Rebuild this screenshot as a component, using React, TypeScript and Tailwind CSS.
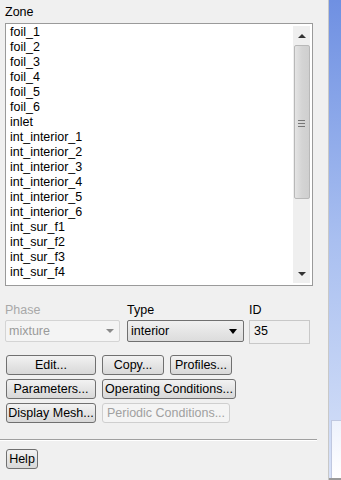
import React from 'react';

const zones = [
  'foil_1', 'foil_2', 'foil_3', 'foil_4', 'foil_5', 'foil_6', 'inlet',
  'int_interior_1', 'int_interior_2', 'int_interior_3', 'int_interior_4',
  'int_interior_5', 'int_interior_6', 'int_sur_f1', 'int_sur_f2', 'int_sur_f3', 'int_sur_f4',
];

const Btn: React.FC<{ label: string; w: string; disabled?: boolean }> = ({ label, w, disabled }) => (
  <div
    className={`${w} h-[20px] flex items-center justify-center rounded-[3px] border text-[12.5px] ${
      disabled
        ? 'border-[#cfcfcf] bg-[#f4f4f4] text-[#a0a0a0]'
        : 'border-[#707070] bg-gradient-to-b from-[#f2f2f2] to-[#d8d8d8] text-black'
    }`}
  >
    {label}
  </div>
);

const App: React.FC = () => {
  return (
    <div className="w-[341px] h-[480px] flex bg-[#f0f0f0] overflow-hidden" style={{ fontFamily: '"Liberation Sans", Arial, sans-serif' }}>
      <div className="w-[329px] h-full flex flex-col border-r border-[#c8c8c8]">
        <div className="pl-[5px] pt-[5px] text-[12.5px] leading-[14px]">Zone</div>
        <div className="ml-[5px] mt-[4px] w-[308px] h-[263px] border border-[#9a9a9a] bg-white flex">
          <div className="flex-1 pl-[4px] pt-[1px] text-[12.5px] leading-[15px]">
            {zones.map((z) => (
              <div key={z}>{z}</div>
            ))}
          </div>
          <div className="w-[17px] mr-[2px] my-[2px] bg-[#efefef] flex flex-col items-center">
            <div className="h-[19px] flex items-center justify-center">
              <div className="w-0 h-0 border-l-[4px] border-r-[4px] border-b-[4px] border-l-transparent border-r-transparent border-b-[#333]" />
            </div>
            <div className="w-[16px] h-[154px] rounded-[2px] border border-[#b8b8b8] bg-gradient-to-r from-[#e4e4e4] via-[#d4d4d4] to-[#cfcfcf] flex flex-col items-center justify-center gap-[2px] pt-[2px]">
              <div className="w-[7px] h-px bg-[#777]" />
              <div className="w-[7px] h-px bg-[#777]" />
              <div className="w-[7px] h-px bg-[#777]" />
            </div>
            <div className="flex-1" />
            <div className="h-[18px] flex items-center justify-center">
              <div className="w-0 h-0 border-l-[4px] border-r-[4px] border-t-[4px] border-l-transparent border-r-transparent border-t-[#333]" />
            </div>
          </div>
        </div>

        <div className="flex mt-[17px] pl-[5px] text-[12.5px]">
          <div className="w-[115px] flex flex-col">
            <div className="leading-[14px] text-[#a8a8a8]">Phase</div>
            <div className="mt-[3px] h-[22px] rounded-[2px] border border-[#d4d4d4] bg-[#f4f4f4] flex items-center justify-between pl-[3px] pr-[5px] text-[#9a9a9a]">
              <span>mixture</span>
              <div className="w-0 h-0 border-l-[4px] border-r-[4px] border-t-[4px] border-l-transparent border-r-transparent border-t-[#8a8a8a]" />
            </div>
          </div>
          <div className="w-[117px] ml-[7px] flex flex-col">
            <div className="leading-[14px]">Type</div>
            <div className="mt-[3px] h-[22px] rounded-[2px] border border-[#707070] bg-gradient-to-b from-[#f0f0f0] to-[#dcdcdc] flex items-center justify-between pl-[3px] pr-[6px]">
              <span>interior</span>
              <div className="w-0 h-0 border-l-[4px] border-r-[4px] border-t-[5px] border-l-transparent border-r-transparent border-t-black" />
            </div>
          </div>
          <div className="w-[62px] ml-[5px] flex flex-col">
            <div className="leading-[14px]">ID</div>
            <div className="mt-[3px] h-[24px] w-[61px] border border-[#c8c8c8] bg-[#f0f0f0] pl-[4px] pt-[2px] leading-[16px]">35</div>
          </div>
        </div>

        <div className="flex flex-col gap-[4px] mt-[11px] pl-[6px]">
          <div className="flex gap-[6px]">
            <Btn label="Edit..." w="w-[90px]" />
            <Btn label="Copy..." w="w-[62px]" />
            <Btn label="Profiles..." w="w-[62px]" />
          </div>
          <div className="flex gap-[6px]">
            <Btn label="Parameters..." w="w-[90px]" />
            <Btn label="Operating Conditions..." w="w-[134px]" />
          </div>
          <div className="flex gap-[6px]">
            <Btn label="Display Mesh..." w="w-[90px]" />
            <Btn label="Periodic Conditions..." w="w-[128px]" disabled />
          </div>
        </div>

        <div className="mt-[16px] w-[317px] h-[2px] border-t border-[#a0a0a0] border-b border-b-white" />

        <div className="mt-[8px] pl-[6px]">
          <Btn label="Help" w="w-[32px]" />
        </div>
      </div>
      <div className="flex-1 h-full flex flex-col bg-gradient-to-b from-[#6f90e2] via-[#a9bff0] to-[#d8e2f8]">
        <div className="h-[420px]" />
        <div className="flex-1 ml-[2px] bg-gradient-to-b from-[#eef2fc] to-white border-l border-t border-[#c0c8e0]" />
        <div className="h-[2px] bg-[#9a9a9a]" />
      </div>
    </div>
  );
};

export default App;
